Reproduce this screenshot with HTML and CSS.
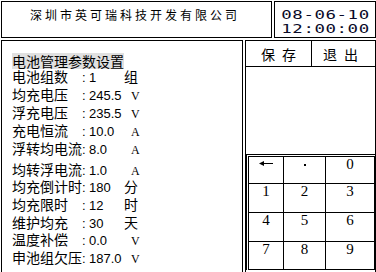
FILE: index.html
```html
<!DOCTYPE html>
<html lang="zh-CN">
<head>
<meta charset="utf-8">
<title>电池管理参数设置</title>
<link rel="stylesheet" href="styles.css">
</head>
<body>
<div class="screen">
  <header class="top">
    <div class="company">深圳市英可瑞科技开发有限公司</div>
    <div class="clock">
      <div class="clock-text">
        <div>08-06-10</div>
        <div>12:00:00</div>
      </div>
    </div>
  </header>
  <main class="lower">
    <section class="params">
      <div class="title"><span>电池管理参数设置</span></div>
      <div class="group g1">
        <div class="row"><span class="lbl">电池组数</span><span class="val"><i>:</i>1</span><span class="unit">组</span></div>
        <div class="row"><span class="lbl">均充电压</span><span class="val"><i>:</i>245.5</span><span class="unit a">V</span></div>
        <div class="row"><span class="lbl">浮充电压</span><span class="val"><i>:</i>235.5</span><span class="unit a">V</span></div>
        <div class="row"><span class="lbl">充电恒流</span><span class="val"><i>:</i>10.0</span><span class="unit a">A</span></div>
        <div class="row"><span class="lbl">浮转均电流</span><span class="val"><i>:</i>8.0</span><span class="unit a">A</span></div>
      </div>
      <div class="group g2">
        <div class="row"><span class="lbl">均转浮电流</span><span class="val"><i>:</i>1.0</span><span class="unit a">A</span></div>
        <div class="row"><span class="lbl">均充倒计时</span><span class="val"><i>:</i>180</span><span class="unit">分</span></div>
        <div class="row"><span class="lbl">均充限时</span><span class="val"><i>:</i>12</span><span class="unit">时</span></div>
        <div class="row"><span class="lbl">维护均充</span><span class="val"><i>:</i>30</span><span class="unit">天</span></div>
        <div class="row"><span class="lbl">温度补偿</span><span class="val"><i>:</i>0.0</span><span class="unit a">V</span></div>
        <div class="row"><span class="lbl">申池组欠压</span><span class="val"><i>:</i>187.0</span><span class="unit a">V</span></div>
      </div>
    </section>
    <aside class="side">
      <div class="btns">
        <div class="btn save"><span>保</span><span>存</span></div>
        <div class="btn exit"><span>退</span><span>出</span></div>
      </div>
      <div class="keypad">
        <div class="keys">
          <div class="key icon"><svg width="14" height="5" viewBox="0 0 14 5"><polygon points="0,2.5 5,0 5,5" fill="#000"/><rect x="4" y="2" width="10" height="1" fill="#000"/></svg></div>
          <div class="key icon"><span class="dot"></span></div>
          <div class="key">0</div>
          <div class="key">1</div>
          <div class="key">2</div>
          <div class="key">3</div>
          <div class="key">4</div>
          <div class="key">5</div>
          <div class="key">6</div>
          <div class="key">7</div>
          <div class="key">8</div>
          <div class="key">9</div>
        </div>
      </div>
    </aside>
  </main>
</div>
</body>
</html>
```

FILE: styles.css
```css
* {
  box-sizing: border-box;
  margin: 0;
  padding: 0;
}

html, body {
  width: 376px;
  height: 272px;
  overflow: hidden;
  background: #fff;
}

body {
  font-family: "Noto Sans CJK SC", sans-serif;
  color: #000;
}

.screen {
  width: 376px;
  height: 272px;
  padding: 1px 0 0 1px;
  display: flex;
  flex-direction: column;
  gap: 2px;
}

/* header */
.top {
  display: flex;
  gap: 2px;
  height: 37px;
  flex: none;
}

.company {
  width: 271px;
  border: 1px solid #000;
  font-size: 12px;
  line-height: 14px;
  letter-spacing: 3px;
  text-align: center;
  padding: 6px 3px 0 0;
  white-space: nowrap;
}

.clock {
  flex: 1;
  border: 1px solid #000;
  display: flex;
  justify-content: center;
  padding-top: 6px;
}

.clock-text {
  font-family: "DejaVu Sans Mono", monospace;
  font-size: 12px;
  line-height: 14px;
  letter-spacing: 0.4px;
  text-align: center;
  transform: scaleX(1.45);
  color: #0a0a28;
}

/* lower area */
.lower {
  display: flex;
  gap: 2px;
  height: 240px;
  flex: none;
}

.params {
  width: 242px;
  border: 1px solid #000;
  padding: 7px 0 0 10px;
}

.title {
  height: 16px;
  margin-bottom: 2.5px;
}

.title span {
  display: inline-block;
  background: #e0e0e0;
  font-size: 14px;
  line-height: 16px;
  height: 16px;
}

.row {
  display: flex;
  align-items: baseline;
  font-size: 14px;
  height: 18px;
  line-height: 18px;
  white-space: nowrap;
}

.g2 {
  margin-top: 4.2px;
}

.g2 .row {
  height: 17.7px;
  line-height: 17.7px;
}

.lbl {
  width: 70px;
}

.val {
  width: 42px;
  font-family: "Liberation Sans", sans-serif;
  font-size: 13px;
}

.val i {
  font-style: normal;
  display: inline-block;
  width: 7px;
}

.unit {
  font-size: 14px;
}

.unit.a {
  font-family: "Liberation Serif", serif;
  font-size: 12px;
  padding-left: 7px;
}

/* right side */
.side {
  width: 131px;
  border: 1px solid #000;
  display: flex;
  flex-direction: column;
}

.btns {
  display: flex;
  height: 26px;
  flex: none;
  border-bottom: 1px solid #000;
}

.btn {
  display: flex;
  justify-content: center;
  align-items: center;
  gap: 7px;
  font-size: 14px;
  line-height: 16px;
}

.btn.save {
  width: 66px;
  border-right: 1px solid #000;
}

.btn.exit {
  flex: 1;
  padding-right: 6px;
}

.keypad {
  margin-top: 87px;
  border-top: 1px solid #000;
  border-left: 1px solid #000;
  padding: 1px 0 0 1px;
}

.keys {
  display: grid;
  grid-template-columns: 35px 42px 49px;
  grid-template-rows: 27px 29px 29px 28px;
  border-top: 1px solid #000;
  border-left: 1px solid #000;
}

.key {
  border-right: 1px solid #000;
  border-bottom: 1px solid #000;
  display: flex;
  justify-content: center;
  align-items: flex-start;
  font-family: "Liberation Serif", serif;
  font-size: 15px;
  line-height: 15px;
}

.key.icon svg {
  margin-top: 4px;
  display: block;
}

.dot {
  display: block;
  width: 2px;
  height: 2px;
  margin-top: 7px;
  background: #000;
}
```
